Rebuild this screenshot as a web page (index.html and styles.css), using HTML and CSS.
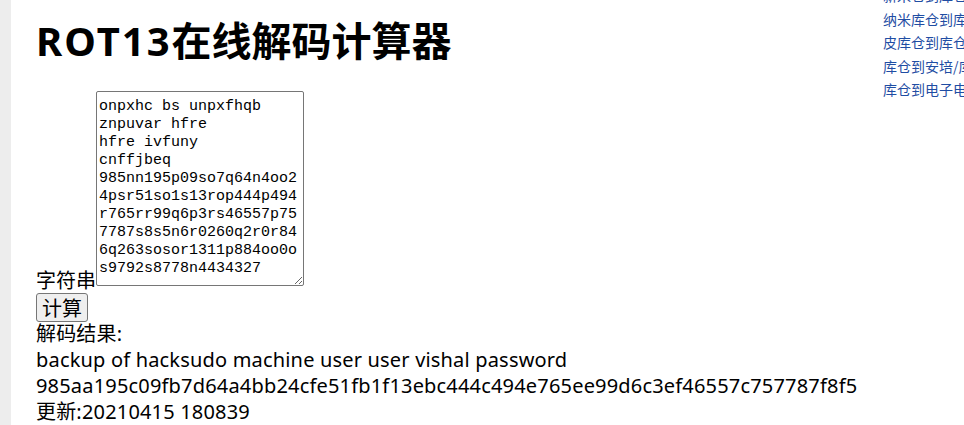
FILE: index.html
```html
<!DOCTYPE html>
<html lang="zh-CN">
<head>
<meta charset="utf-8">
<title>ROT13在线解码计算器</title>
<link rel="stylesheet" href="styles.css">
</head>
<body>
<div class="page">
  <div class="strip"></div>
  <main class="main">
    <h1 class="title"><span class="latin">ROT13</span>在线解码计算器</h1>
    <form class="calc">
      <div class="field">
        <label class="label" for="src">字符串</label>
        <textarea id="src" class="input" spellcheck="false">onpxhc bs unpxfhqb
znpuvar hfre
hfre ivfuny
cnffjbeq
985nn195p09so7q64n4oo24psr51so1s13rop444p494r765rr99q6p3rs46557p757787s8s5n6r0260q2r0r846q263sosor1311p884oo0os9792s8778n4434327</textarea>
      </div>
      <button type="button" class="btn">计算</button>
    </form>
    <div class="result">
      <div>解码结果:</div>
      <div>backup of hacksudo machine user user vishal password</div>
      <div>985aa195c09fb7d64a4bb24cfe51fb1f13ebc444c494e765ee99d6c3ef46557c757787f8f5</div>
      <div>更新:20210415 180839</div>
    </div>
  </main>
  <aside class="side">
    <a class="link" href="#">新米仓到库仓到库</a>
    <a class="link" href="#">纳米库仓到库仓到</a>
    <a class="link" href="#">皮库仓到库仓到库</a>
    <a class="link" href="#">库仓到安培/库仓</a>
    <a class="link" href="#">库仓到电子电库</a>
  </aside>
</div>
</body>
</html>
```
FILE: styles.css
```css
html, body {
  margin: 0;
  padding: 0;
  background: #ffffff;
  overflow: hidden;
}
body {
  font-family: "Noto Sans", "Noto Sans CJK SC", sans-serif;
  font-size: 20px;
  line-height: 26px;
  color: #000;
}
.page {
  display: flex;
  min-height: 425px;
}
.strip {
  width: 11px;
  flex: none;
  background: #ededed;
}
.main {
  flex: 1;
  padding-left: 25px;
}
.title {
  font-size: 40px;
  line-height: 48px;
  font-weight: bold;
  margin: 17px 0 26px;
}
.latin {
  letter-spacing: 2px;
}
.calc {
  margin: 0;
}
.field {
  display: flex;
  align-items: flex-end;
}
.label {
  line-height: 20px;
  margin-bottom: -5px;
}
.input {
  width: 202px;
  height: 187px;
  margin: 0;
  padding: 6px 2px 0;
  border: 1px solid #767676;
  border-radius: 2px;
  font-family: "Liberation Mono", monospace;
  font-size: 15px;
  line-height: 18px;
  color: #000;
  resize: both;
  overflow: hidden;
}
.btn {
  display: block;
  margin-top: 7px;
  font-family: "Noto Sans CJK SC", sans-serif;
  font-size: 20px;
  line-height: 25px;
  padding: 1px 5px;
  border: 1px solid #767676;
  border-radius: 3px;
  background: #efefef;
  color: #000;
}
.result {
  margin-top: -1px;
  letter-spacing: 0.18px;
}
.side {
  width: 81px;
  flex: none;
  overflow: hidden;
  white-space: nowrap;
  display: flex;
  flex-direction: column;
  margin-top: -16px;
  font-family: "Noto Sans CJK SC", sans-serif;
  font-size: 14px;
  line-height: 23.5px;
}
.link {
  color: #1f4da3;
  text-decoration: none;
}
```
